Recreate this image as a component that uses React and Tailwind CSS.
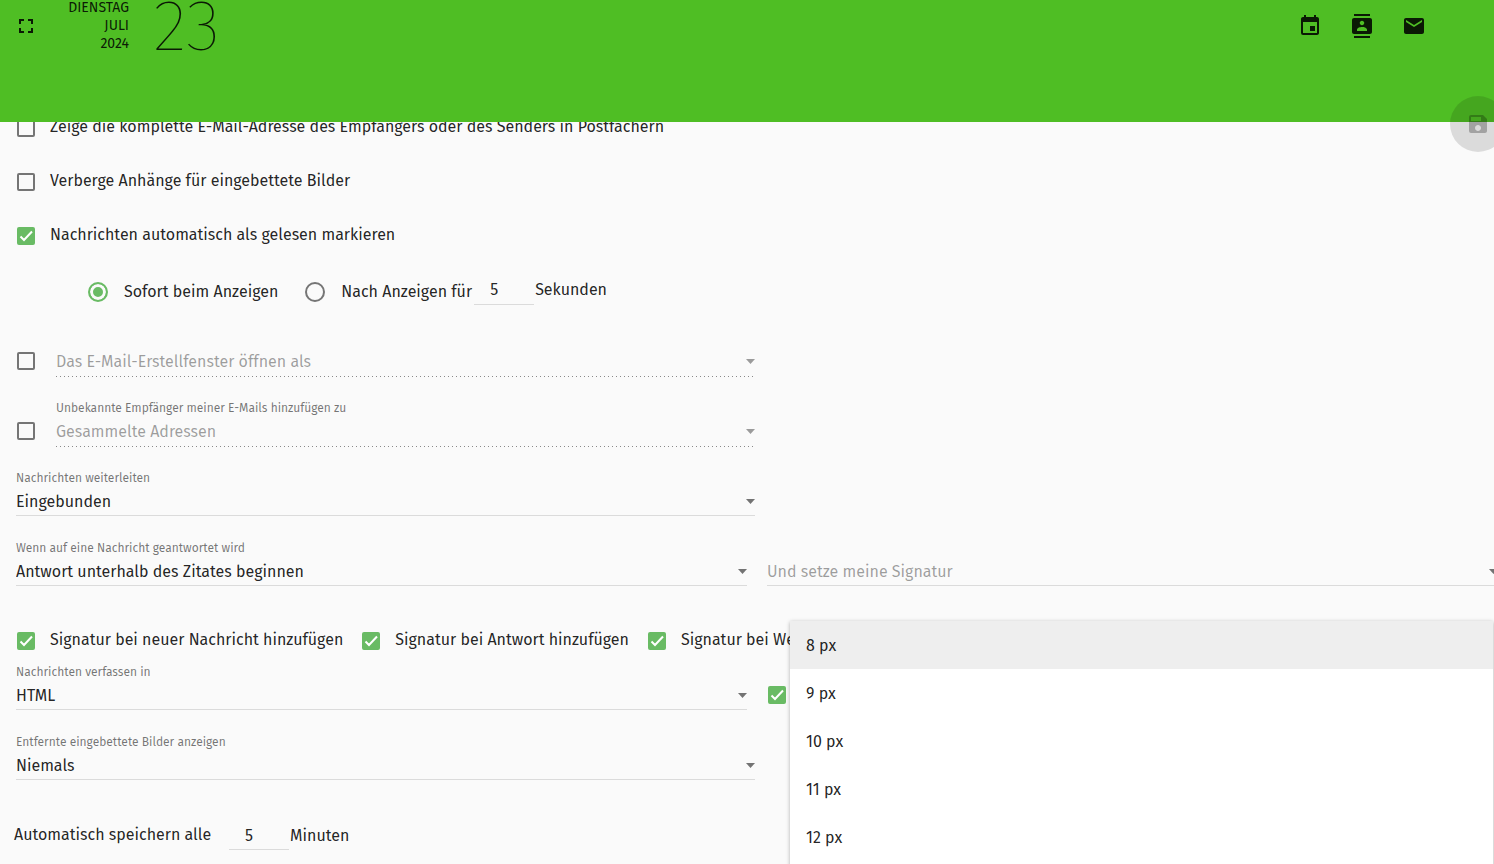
import React, { useState } from "react";
import { MdContacts, MdEmail, MdEvent, MdFullscreen, MdSave } from "react-icons/md";

const fontSizes = [8, 9, 10, 11, 12];

function Checkbox({ id, label, defaultChecked = false }) {
  return (
    <span className="grid size-5 shrink-0 place-items-center">
      <input
        id={id}
        type="checkbox"
        aria-label={label}
        defaultChecked={defaultChecked}
        className="peer col-start-1 row-start-1 size-[18px] appearance-none rounded-xs border-2 border-[#757575] checked:border-[#69bb64] checked:bg-[#69bb64]"
      />
      <svg
        viewBox="0 0 18 18"
        className="pointer-events-none invisible col-start-1 row-start-1 size-[18px] peer-checked:visible"
      >
        <path d="M3.5 9.5 7 13l8-8.500" fill="none" stroke="#fff" strokeWidth="2" />
      </svg>
    </span>
  );
}

function CheckboxRow({ id, label, defaultChecked }) {
  return (
    <div className="flex items-center gap-3.5">
      <Checkbox id={id} defaultChecked={defaultChecked} />
      <label htmlFor={id} className="pb-0.5 whitespace-nowrap">
        {label}
      </label>
    </div>
  );
}

function SelectField({ id, label, value, placeholder = false, disabled = false }) {
  return (
    <div className="min-w-0 flex-1">
      {label && (
        <label htmlFor={id} className="-mb-0.5 block text-xs leading-[22px] text-black/54">
          {label}
        </label>
      )}
      <div className="grid items-center">
        <select
          id={id}
          aria-label={label ? undefined : value}
          disabled={disabled}
          className={`col-start-1 row-start-1 w-full appearance-none opacity-100 ${
            disabled
              ? "h-[30px] bg-[linear-gradient(to_right,rgba(0,0,0,0.45)_25%,transparent_25%)] bg-[length:4px_1px] bg-bottom-left bg-repeat-x"
              : "mb-px h-[29px] border-b border-black/12 bg-transparent pt-0.5"
          } ${disabled || placeholder ? "text-black/38" : "text-black/87"}`}
        >
          <option>{value}</option>
        </select>
        <svg
          viewBox="0 0 9 5"
          className={`pointer-events-none col-start-1 row-start-1 mb-px h-[5px] w-[9px] justify-self-end ${
            disabled ? "text-black/38" : "text-black/54"
          }`}
        >
          <path d="M0 0h9L4.500 5z" fill="currentColor" />
        </svg>
      </div>
    </div>
  );
}

function NumberInput({ label, defaultValue }) {
  return (
    <input
      type="text"
      inputMode="numeric"
      aria-label={label}
      defaultValue={defaultValue}
      className="h-[29px] w-[60px] border-b border-black/12 bg-transparent pl-4 outline-none"
    />
  );
}

function Header() {
  return (
    <header className="flex h-[122px] shrink-0 items-start justify-between bg-[#4fbe24] text-black/87">
      <div className="flex items-start">
        <button type="button" aria-label="Vollbild" className="mt-3.5 ml-3.5">
          <MdFullscreen className="size-6" />
        </button>
        <div className="-mt-px w-[91px] text-right text-sm leading-[18px] uppercase">
          <div>Dienstag</div>
          <div>Juli</div>
          <div>2024</div>
        </div>
        <div className="ml-6 text-[72px] leading-[52px] font-thin">23</div>
      </div>
      <nav className="mt-3.5 mr-[68px] flex gap-7">
        <button type="button" aria-label="Kalender">
          <MdEvent className="size-6" />
        </button>
        <button type="button" aria-label="Adressbuch">
          <MdContacts className="size-6" />
        </button>
        <button type="button" aria-label="E-Mail">
          <MdEmail className="size-6" />
        </button>
      </nav>
    </header>
  );
}

function FontSizeMenu() {
  const [selected, setSelected] = useState(8);

  return (
    <ul
      role="listbox"
      aria-label="Schriftgröße"
      className="absolute -top-[38px] right-[5px] left-[23px] z-10 bg-white pb-12 shadow-[0_1px_4px_rgba(0,0,0,0.3)]"
    >
      {fontSizes.map((size) => (
        <li
          key={size}
          role="option"
          aria-selected={selected === size}
          onClick={() => setSelected(size)}
          className={`flex h-12 cursor-pointer items-center px-4 pt-0.5 ${
            selected === size ? "bg-[#eeeeee]" : ""
          }`}
        >
          {size} px
        </li>
      ))}
    </ul>
  );
}

export default function App() {
  const [readMode, setReadMode] = useState("now");
  const radioClass =
    "size-5 appearance-none rounded-full border-2 border-[#757575] checked:border-[#69bb64] checked:bg-[#69bb64] checked:shadow-[inset_0_0_0_3px_#fafafa]";

  return (
    <div className="relative flex h-screen flex-col overflow-hidden bg-[#fafafa] font-['Fira_Sans',Roboto,sans-serif] text-base text-black/87">
      <div className="z-10">
        <Header />
      </div>
      <button
        type="button"
        aria-label="Speichern"
        className="absolute top-24 -right-3 z-20 grid size-14 place-items-center rounded-full bg-black/12 text-black/26"
      >
        <MdSave className="size-6" />
      </button>

      <main className="-mt-[21px] pl-4">
        <div className="grid auto-rows-[54px]">
          <CheckboxRow
            id="full-address"
            label="Zeige die komplette E-Mail-Adresse des Empfängers oder des Senders in Postfächern"
          />
          <CheckboxRow id="hide-inline" label="Verberge Anhänge für eingebettete Bilder" />
          <CheckboxRow
            id="auto-read"
            label="Nachrichten automatisch als gelesen markieren"
            defaultChecked
          />
        </div>

        <div className="flex h-14 items-center pl-[72px]">
          <label className="flex items-center gap-4 pt-0.5">
            <input
              type="radio"
              name="read-mode"
              checked={readMode === "now"}
              onChange={() => setReadMode("now")}
              className={radioClass}
            />
            Sofort beim Anzeigen
          </label>
          <label className="ml-[27px] flex items-center gap-4 pt-0.5">
            <input
              type="radio"
              name="read-mode"
              checked={readMode === "delay"}
              onChange={() => setReadMode("delay")}
              className={radioClass}
            />
            Nach Anzeigen für
          </label>
          <div className="ml-0.5 flex items-center gap-px pb-0.5">
            <NumberInput label="Sekunden" defaultValue="5" />
            <span>Sekunden</span>
          </div>
        </div>

        <div className="flex h-[58px] w-1/2 items-end gap-5">
          <div className="flex h-8 items-center">
            <Checkbox label="Erstellfenster festlegen" />
          </div>
          <SelectField id="compose-window" value="Das E-Mail-Erstellfenster öffnen als" disabled />
        </div>
        <div className="flex h-[70px] w-1/2 items-end gap-5">
          <div className="flex h-8 items-center">
            <Checkbox label="Unbekannte Empfänger hinzufügen" />
          </div>
          <SelectField
            id="collect-addresses"
            label="Unbekannte Empfänger meiner E-Mails hinzufügen zu"
            value="Gesammelte Adressen"
            disabled
          />
        </div>
        <div className="flex h-[70px] w-1/2 items-end">
          <SelectField id="forwarding" label="Nachrichten weiterleiten" value="Eingebunden" />
        </div>

        <div className="-mr-1 grid h-[70px] grid-cols-2 items-end gap-5">
          <SelectField
            id="reply-placement"
            label="Wenn auf eine Nachricht geantwortet wird"
            value="Antwort unterhalb des Zitates beginnen"
          />
          <SelectField id="signature-placement" value="Und setze meine Signatur" placeholder />
        </div>

        <div className="mt-9 flex h-9 items-center gap-[18px]">
          <CheckboxRow
            id="signature-new"
            label="Signatur bei neuer Nachricht hinzufügen"
            defaultChecked
          />
          <CheckboxRow
            id="signature-reply"
            label="Signatur bei Antwort hinzufügen"
            defaultChecked
          />
          <CheckboxRow
            id="signature-forward"
            label="Signatur bei Weiterleitung hinzufügen"
            defaultChecked
          />
        </div>

        <div className="-mr-1 grid h-[52px] grid-cols-2 gap-5">
          <div className="flex items-end">
            <SelectField id="compose-format" label="Nachrichten verfassen in" value="HTML" />
          </div>
          <div className="relative flex items-end">
            <div className="flex h-8 items-center">
              <Checkbox label="Standard-Schriftgröße" defaultChecked />
            </div>
            <FontSizeMenu />
          </div>
        </div>
        <div className="flex h-[70px] w-1/2 items-end">
          <SelectField
            id="remote-images"
            label="Entfernte eingebettete Bilder anzeigen"
            value="Niemals"
          />
        </div>

        <div className="mt-10 -ml-0.5 flex items-center">
          <span className="pb-0.5">Automatisch speichern alle</span>
          <div className="ml-[18px] flex items-center gap-px">
            <NumberInput label="Minuten" defaultValue="5" />
            <span>Minuten</span>
          </div>
        </div>
      </main>
    </div>
  );
}
